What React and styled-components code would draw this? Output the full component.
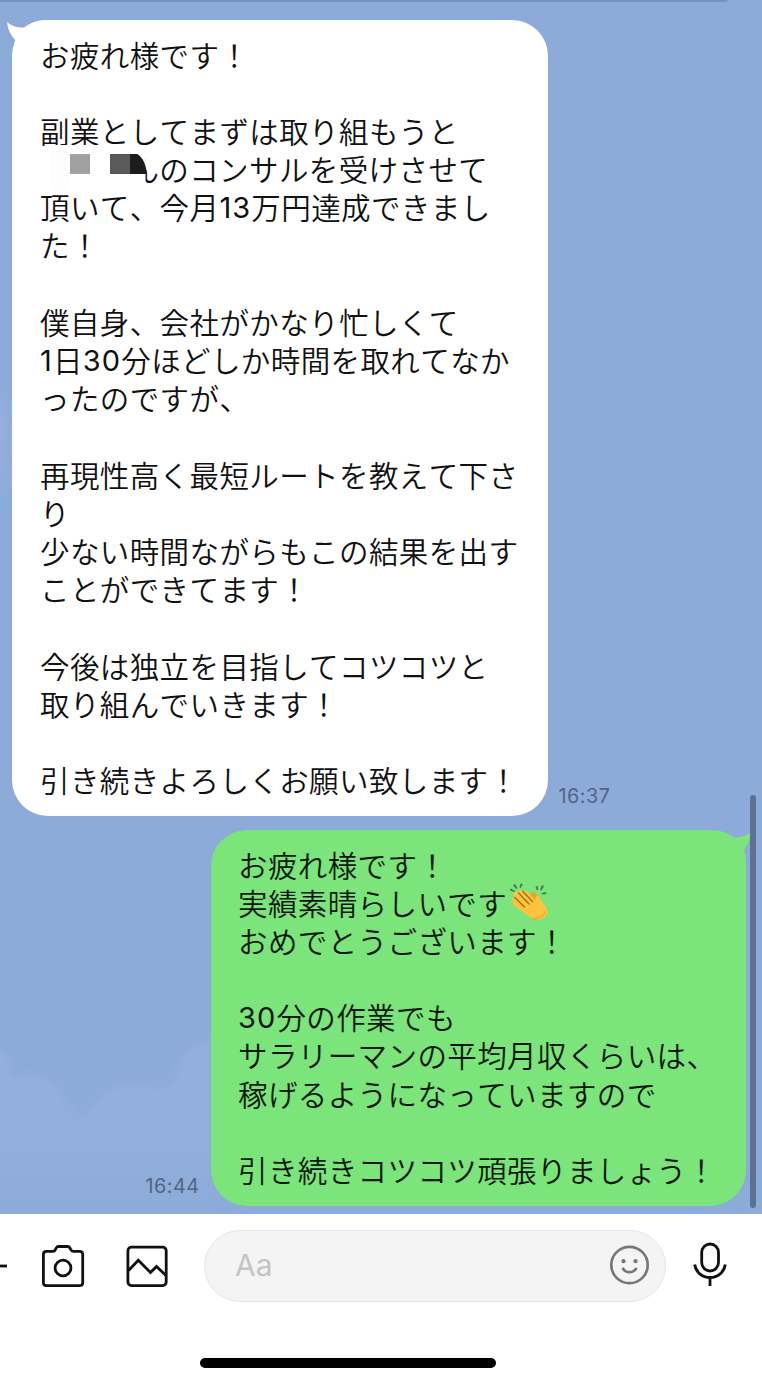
import React from "react";
import styled, { createGlobalStyle } from "styled-components";

const GlobalStyle = createGlobalStyle`
  * {
    box-sizing: border-box;
  }
  body {
    margin: 0;
    background: #fff;
    font-family: Inter, "Noto Sans CJK JP", sans-serif;
  }
`;

const Screen = styled.div`
  width: 762px;
  height: 1384px;
  overflow: hidden;
  display: flex;
  flex-direction: column;
  background: #fff;
`;

const Chat = styled.main`
  position: relative;
  height: 1214px;
  padding: 20px 16px 0 12px;
  display: flex;
  flex-direction: column;
  gap: 14px;
  background: #8dabd9;
`;

const Sky = styled.svg`
  position: absolute;
  left: 0;
  top: 0;
`;

const HeaderEdge = styled.div`
  position: absolute;
  left: 0;
  top: 0;
  width: 728px;
  height: 2px;
  background: #7490bb;
  border-bottom-right-radius: 6px 2px;
`;

const Row = styled.div`
  position: relative;
  display: flex;
  align-items: flex-end;
  justify-content: ${(props) => (props.$mine ? "flex-end" : "flex-start")};
`;

const Bubble = styled.div`
  position: relative;
  width: ${(props) => (props.$mine ? 535.5 : 536)}px;
  height: ${(props) => (props.$mine ? 376 : 796)}px;
  padding: 14.5px 0 0 ${(props) => (props.$mine ? 27.5 : 28)}px;
  border-radius: 36px;
  background: ${(props) => (props.$mine ? "#7be47b" : "#fff")};
  color: ${(props) => (props.$mine ? "#08170a" : "#111")};
`;

const Tail = styled.svg`
  position: absolute;
  top: 0;
  ${(props) => (props.$mine ? "right: -7px;" : "left: -6px;")}
`;

const Line = styled.div`
  display: flex;
  align-items: center;
  height: 38.2px;
  font-family: "Noto Sans CJK JP", sans-serif;
  font-size: 29.5px;
  font-weight: 350;
  font-kerning: none;
  line-height: 38.2px;
  letter-spacing: 0.4px;
  white-space: pre;
`;

const Digits = styled.span`
  margin-top: 4px;
  font-family: Inter, sans-serif;
  font-size: 29px;
  font-weight: 400;
  line-height: 34px;
  letter-spacing: 1.1px;
`;

const Mosaic = styled.span`
  position: relative;
  width: 89.4px;
  height: 38px;
`;

const MosaicArt = styled.svg`
  position: absolute;
  left: 0;
  top: -4.5px;
`;

const Time = styled.time`
  margin: ${(props) => (props.$mine ? "0 11px 8px 0" : "0 0 8px 10.5px")};
  font-size: 19.8px;
  line-height: 24px;
  letter-spacing: 0.5px;
  color: #536586;
`;

const Scrollbar = styled.div`
  position: absolute;
  right: 6px;
  top: 795px;
  width: 6px;
  height: 413px;
  border-radius: 3px;
  background: #5c7290;
`;

const Toolbar = styled.footer`
  position: relative;
  height: 144px;
  padding: 16px 35px 0 0;
  display: flex;
  align-items: flex-start;
`;

const Tool = styled.svg`
  flex: none;
  margin-left: ${(props) => props.$gap}px;
  fill: none;
  stroke: #111;
  stroke-width: 2.8;
`;

const Field = styled.div`
  width: 462px;
  height: 72px;
  margin-left: 36px;
  padding: 0 15px 2px 30px;
  display: flex;
  align-items: center;
  justify-content: space-between;
  border: 1px solid #e6e6e6;
  border-radius: 36px;
  background: #f4f4f4;
  color: #c4c4c4;
  font-size: 30px;
  font-weight: 400;
`;

const HomeIndicator = styled.div`
  width: 296px;
  height: 10px;
  margin-left: 200px;
  border-radius: 5px;
  background: #000;
`;

const Clap = styled.svg`
  margin: 3px 0 0 1px;
`;

const received = [
  "お疲れ様です！",
  "",
  "副業としてまずは取り組もうと",
  "#んのコンサルを受けさせて",
  "頂いて、今月13万円達成できまし",
  "た！",
  "",
  "僕自身、会社がかなり忙しくて",
  "1日30分ほどしか時間を取れてなか",
  "ったのですが、",
  "",
  "再現性高く最短ルートを教えて下さ",
  "り",
  "少ない時間ながらもこの結果を出す",
  "ことができてます！",
  "",
  "今後は独立を目指してコツコツと",
  "取り組んでいきます！",
  "",
  "引き続きよろしくお願い致します！",
];

const sent = [
  "お疲れ様です！",
  "実績素晴らしいです👏",
  "おめでとうございます！",
  "",
  "30分の作業でも",
  "サラリーマンの平均月収くらいは、",
  "稼げるようになっていますので",
  "",
  "引き続きコツコツ頑張りましょう！",
];

const ClapIcon = () => (
  <Clap width="42" height="42" viewBox="0 0 42 42">
    <g fill="#48795a">
      <path d="M1.500 8l1.500-1.500 4 2.500-.8 1.300zM5 3l2.200-1 2.300 4.300-1.500.8zM12.500 1.500l2.300.6-2 4-1.300-.5zM27.500 4.500l2.200-.5.5 4-1.500.3zM34 3l2 1.200-2.500 4.300-1.500-.8zM38 10l.4 2-4.700.4v-1.400z" />
    </g>
    <path
      d="M23 15c-.5-3 .5-5.500 2.700-5.300 2.500.2 3.300 4.300 5.300 7.800L39.500 27l-7 6z"
      fill="#eba327"
    />
    <path
      d="M5 19.500c-2-2-.3-4.700 1.800-4C4.800 12.800 5.500 10.300 7.300 9.800c1.200-.4 2.300.2 3.200 1.200-.3-2.800 2.200-3.700 4.200-1.700 1-1.300 2.800-1 4.300.5l8.500 8.700c.3-2-.2-4.500 1.800-5 2.500-.5 3.200 4 5.700 7.500L39 26.500c1.300 3.500.3 7-3.500 9.500-4 2.800-8.500 2.500-12 0L7.500 24.500c-2.300-1.600-3.500-3.500-2.500-5z"
      fill="#fcc43e"
    />
    <path
      d="M6.800 15.500l9.700 9.500M10.500 11l10.500 11M14.700 9.300l10 10.400"
      fill="none"
      stroke="#a9690f"
      strokeWidth="1.300"
      strokeLinecap="round"
    />
    <path d="M24 36.500c5.500 1.500 11.500-2 13.500-7" fill="none" stroke="#efab2c" strokeWidth="1.500" />
  </Clap>
);

const MosaicBlock = () => (
  <Mosaic>
    <MosaicArt width="108" height="50" viewBox="0 0 108 50">
      <path d="M10 0h95.500v46H10z" fill="#fff" />
      <path d="M10 6h20v40H10z" fill="#fdfdfd" />
      <path d="M30 9h20v20H30z" fill="#a1a1a1" />
      <path d="M70 9h20v20H70z" fill="#5a5a5a" />
      <path d="M90 9h7c6 3 9 11 10 20H90z" fill="#1c1c1c" />
    </MosaicArt>
  </Mosaic>
);

// "#" stands for the hidden name, digits use the latin face
const renderPart = (part, index) => {
  if (part === "#") return <MosaicBlock key={index} />;
  if (part === "👏") return <ClapIcon key={index} />;
  if (/^\d+$/.test(part)) return <Digits key={index}>{part}</Digits>;
  return <span key={index}>{part}</span>;
};

const Message = ({ lines, time, mine }) => (
  <Row $mine={mine}>
    {mine && <Time $mine>{time}</Time>}
    <Bubble $mine={mine}>
      {mine ? (
        <Tail $mine width="52" height="44" viewBox="0 0 52 44">
          <path d="M12 0C20 0 28 4 33 7.300c6 .7 13-2 18.500-5.300-1 6-5 12-8.500 18.500 2 5 2 9 2 14z" fill="#7be47b" />
        </Tail>
      ) : (
        <Tail width="52" height="44" viewBox="0 0 52 44">
          <path d="M40 0C31 0 24 3 18 7.500 11 8 6 6 1 2c1 8 4 13 8 18L6 36z" fill="#fff" />
        </Tail>
      )}
      {lines.map((line, index) => (
        <Line key={index}>
          {line.split(/(#|👏|\d+)/).filter(Boolean).map(renderPart)}
        </Line>
      ))}
    </Bubble>
    {!mine && <Time>{time}</Time>}
  </Row>
);

const App = () => (
  <>
    <GlobalStyle />
    <Screen>
      <Chat>
        <Sky width="762" height="1214" viewBox="0 0 762 1214">
          <defs>
            <linearGradient id="cloud" x1="0" y1="0" x2="0" y2="1">
              <stop offset="0" stopColor="#9ab3dc" stopOpacity="0.5" />
              <stop offset="0.6" stopColor="#98b1dc" stopOpacity="0.6" />
              <stop offset="1" stopColor="#8dabd9" stopOpacity="0.2" />
            </linearGradient>
            <filter id="soft">
              <feGaussianBlur stdDeviation="4" />
            </filter>
          </defs>
          <g fill="url(#cloud)" filter="url(#soft)">
            <path d="M-10 1048c14-2 20 10 22 29 12-5 34-1 42 8 8 6 10 12 12 18 8 2 12 8 14 16 6-4 10-10 18-20 10-14 44-18 58-10 12 0 20-8 22-22 6-14 16-24 34-28v180H-10z" />
            <path d="M-10 396c12-4 18 10 18 30v80H-10z" />
          </g>
        </Sky>
        <HeaderEdge />
        <Message lines={received} time="16:37" />
        <Message lines={sent} time="16:44" mine />
        <Scrollbar />
      </Chat>
      <Toolbar>
        <Tool $gap={0} width="7" height="72" viewBox="0 0 7 72">
          <path d="M0 36h7" />
        </Tool>
        <Tool $gap={34} width="44" height="72" viewBox="41 1230 44 72">
          <path
            d="M46.500 1251.300h6.500c1.500 0 2-.6 2.500-2l.8-1.500c.5-.9 1-1.300 2-1.300h9.500c1 0 1.500.4 2 1.300l.8 1.500c.6 1.400 1.200 2 2.500 2h6.500c2 0 3.100 1 3.100 3v28.400c0 2-1 3-3.100 3h-33c-2 0-3.200-1-3.200-3v-28.400c0-2 1.200-3 3.100-3z"
            strokeLinejoin="round"
          />
          <circle cx="63" cy="1268" r="7.900" />
        </Tool>
        <Tool $gap={41} width="42" height="72" viewBox="126 1230 42 72">
          <rect x="127.900" y="1247.200" width="38.300" height="38.400" rx="3.500" />
          <path d="M128.500 1270.500l9.800-10.200 12.200 12.200 6-6 9.500 9" />
        </Tool>
        <Field>
          Aa
          <svg width="40" height="40" viewBox="0 0 40 40" fill="none" stroke="#777" strokeWidth="2.700">
            <circle cx="19.500" cy="20" r="18.200" />
            <path d="M12.500 22.800c3 5.800 11 5.800 14 0" />
            <circle cx="13.500" cy="16.200" r="2.100" fill="#777" stroke="none" />
            <circle cx="25.500" cy="16.200" r="2.100" fill="#777" stroke="none" />
          </svg>
        </Field>
        <Tool $gap={27} width="34" height="72" viewBox="693 1230 34 72">
          <rect x="701.700" y="1244" width="16.800" height="27" rx="8.400" />
          <path d="M694.700 1264.500c1 7.500 7.500 13 15.300 13s14.300-5.500 15.300-13M710 1277.500v8.500" />
        </Tool>
      </Toolbar>
      <HomeIndicator />
    </Screen>
  </>
);

export default App;
